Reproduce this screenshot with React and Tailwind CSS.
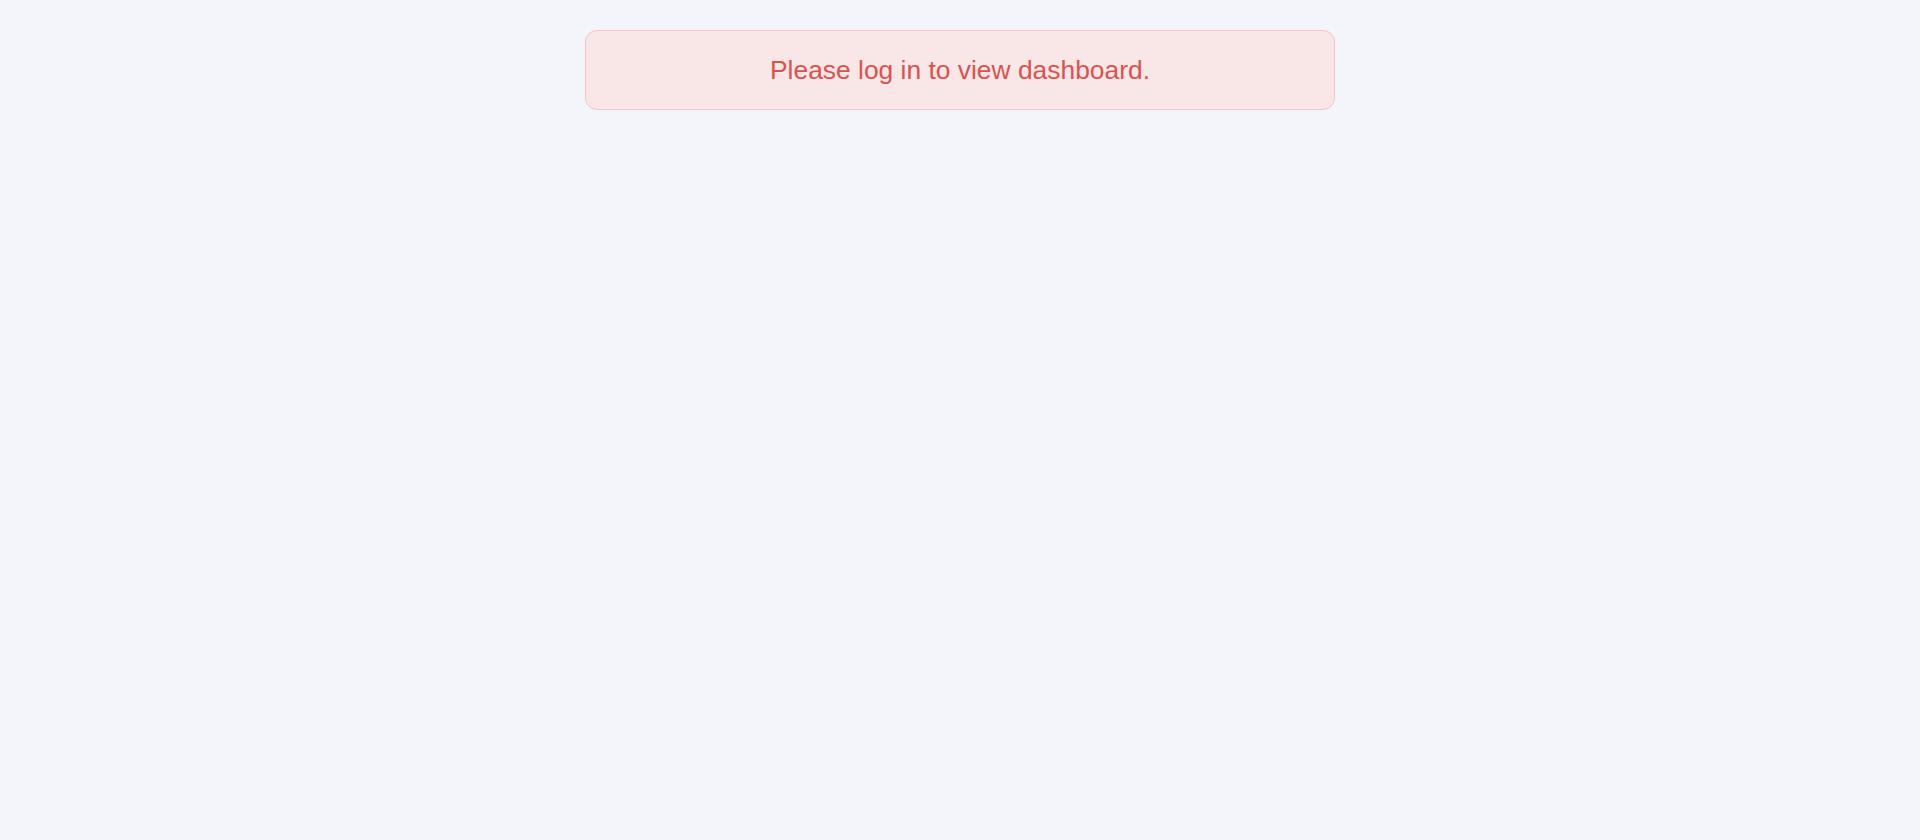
export default function App() {
  return (
    <div className="min-h-[840px] w-full bg-[#f4f5fa] pt-[30px]" style={{ fontFamily: '"Liberation Sans", Arial, sans-serif' }}>
      <div className="mx-auto flex h-[80px] w-[750px] items-center justify-center rounded-[12px] border border-[#f7c1c9] bg-[#f9e6e7]">
        <p className="text-[26.4px] leading-[30px] text-[#d9534f]">Please log in to view dashboard.</p>
      </div>
    </div>
  );
}
